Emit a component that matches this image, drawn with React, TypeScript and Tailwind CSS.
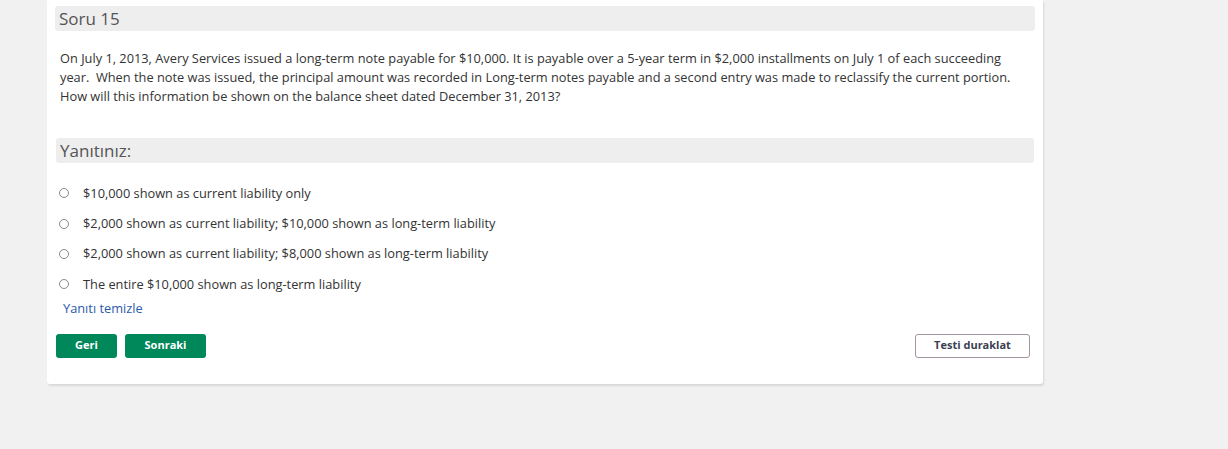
const options = [
  "$10,000 shown as current liability only",
  "$2,000 shown as current liability; $10,000 shown as long-term liability",
  "$2,000 shown as current liability; $8,000 shown as long-term liability",
  "The entire $10,000 shown as long-term liability",
];

export default function App() {
  return (
    <div className="h-[449px] w-full bg-[#f1f1f1] font-['Open_Sans',sans-serif]">
      <div className="ml-[47px] w-[996px] rounded-b-[3px] bg-white px-2 pt-[6px] pb-[26px] shadow-[1px_2px_2px_rgba(0,0,0,0.1)]">
        <div className="flex h-[25px] items-center rounded-[3px] bg-[#eeeeee] pl-[4px] text-[17px] text-[#555555]">
          Soru 15
        </div>

        <p className="mt-[18px] w-[960px] pl-[5px] text-[12.8px] leading-[19px] text-[#333333]">
          On July 1, 2013, Avery Services issued a long-term note payable for $10,000. It is payable over a 5-year term in $2,000 installments on July 1 of each succeeding year.&nbsp; When the note was issued, the principal amount was recorded in Long-term notes payable and a second entry was made to reclassify the current portion. How will this information be shown on the balance sheet dated December 31, 2013?
        </p>

        <div className="mx-px mt-[32px] flex h-[25px] items-center rounded-[3px] bg-[#eeeeee] pl-[4px] text-[17px] text-[#555555]">
          Yanıtınız:
        </div>

        <div className="mt-[15px]">
          {options.map((opt, i) => (
            <label key={i} className="flex h-[30.4px] items-center text-[12.8px] text-[#333333]">
              <span className="ml-[4px] h-[10px] w-[10px] rounded-full border border-[#8a8a8a] bg-white" />
              <span className="ml-[14px]">{opt}</span>
            </label>
          ))}
        </div>

        <div className="-mt-[1px] pl-[8px] text-[12.8px] leading-[19px] text-[#2b5bab]">Yanıtı temizle</div>

        <div className="mt-[16px] flex items-center pl-px">
          <button className="h-[24px] w-[61px] rounded-[3px] bg-[#00875a] text-[11px] font-bold text-white">
            Geri
          </button>
          <button className="ml-[8px] h-[24px] w-[81px] rounded-[3px] bg-[#00875a] text-[11px] font-bold text-white">
            Sonraki
          </button>
          <button className="ml-auto mr-[5px] h-[24px] w-[115px] rounded-[3px] border border-[#a3929f] bg-white text-[11px] font-bold text-[#3b3f52]">
            Testi duraklat
          </button>
        </div>
      </div>
    </div>
  );
}
